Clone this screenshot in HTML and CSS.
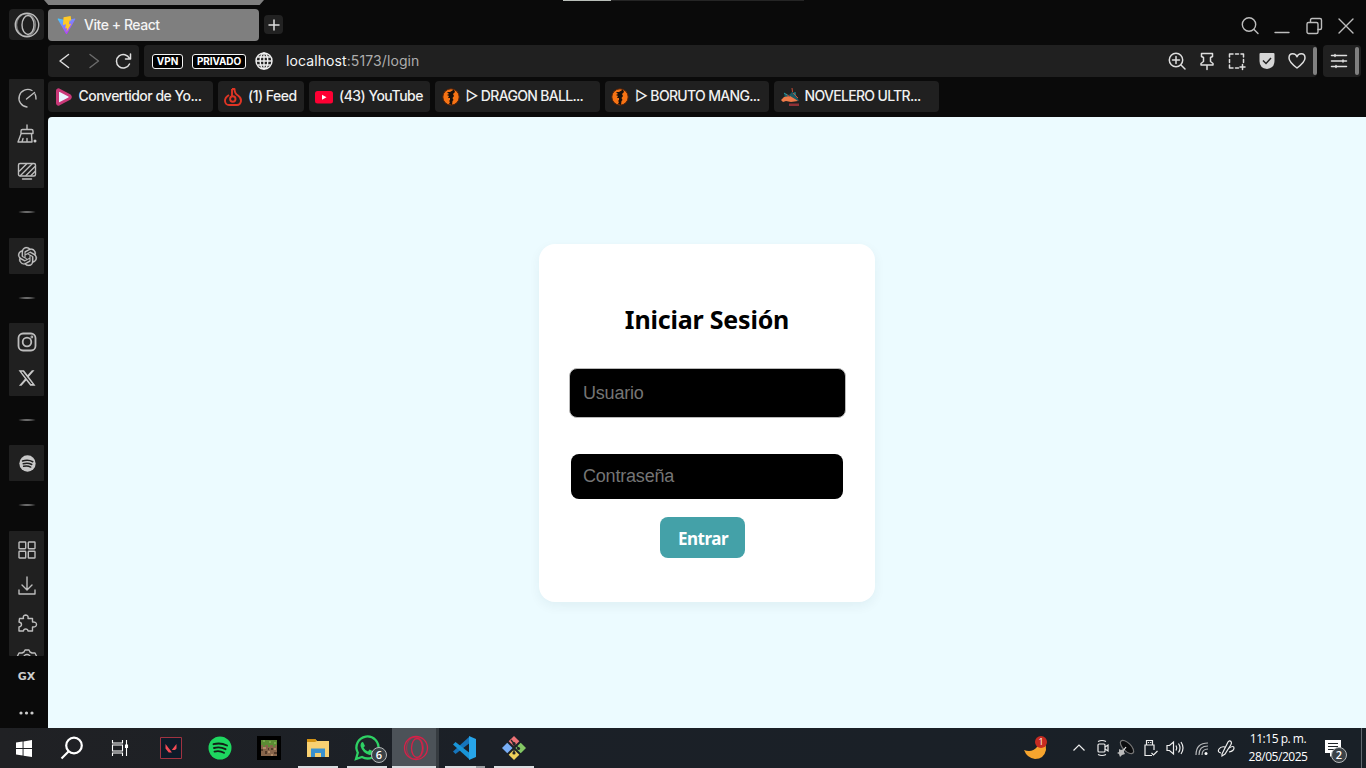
FILE: index.html
```html
<!DOCTYPE html>
<html lang="es">
<head>
<meta charset="utf-8">
<title>Vite + React</title>
<link rel="stylesheet" href="styles.css">
</head>
<body>
<div class="browser">
  <aside class="sidebar">
    <div class="opera-button"><svg width="28" height="28" viewBox="0 0 28 28" class="line"><circle cx="14" cy="14" r="11.700"/><ellipse cx="15" cy="14" rx="6" ry="9.500"/><ellipse cx="13" cy="14" rx="9.500" ry="11.200" opacity=".6"/></svg></div>
    <div class="side-group group-tools">
      <div class="side-item"><svg width="20" height="20" viewBox="0 0 20 20" class="line"><path d="M15 2.500A8.800 8.800 0 1 0 10 19M19 11A9 9 0 0 0 18 6M9.500 11l8-6.500"/></svg></div>
      <div class="side-item"><svg width="20" height="20" viewBox="0 0 20 20" class="line"><path d="M10 1v4M4 9.500V7Q4 5.500 5.500 5.500h9q1.500 0 1.500 1.500v2.500zM4 10L1 18H15L14.500 10M5 18l1-3.500M10 18v-3.500"/><circle cx="18" cy="17" r="1.500" fill="#ccc" stroke="none"/></svg></div>
      <div class="side-item"><svg width="20" height="20" viewBox="0 0 20 20" class="line"><rect x="1.500" y="2.500" width="17" height="12.500" rx="1.500"/><path d="M2.500 10l7-7M3.500 14.500L15 3M9 14.500l9-9M14 14.500l4-4M5.500 18h9"/></svg></div>
    </div>
    <i class="side-rule rule-a"></i>
    <div class="side-group group-chat"><div class="side-item"><svg width="19" height="19" viewBox="0 0 24 24" fill="#c4c4c4" stroke="#c4c4c4" stroke-width=".3"><path d="M22.280 9.820a5.980 5.980 0 0 0-.520-4.910 6.050 6.050 0 0 0-6.510-2.900A6.070 6.070 0 0 0 4.980 4.180a5.980 5.980 0 0 0-4 2.900 6.050 6.050 0 0 0 .740 7.100 5.980 5.980 0 0 0 .510 4.910 6.050 6.050 0 0 0 6.510 2.900A5.980 5.980 0 0 0 13.260 24a6.060 6.060 0 0 0 5.770-4.210 5.990 5.990 0 0 0 4-2.900 6.060 6.060 0 0 0-.750-7.070zm-9.020 12.610a4.480 4.480 0 0 1-2.880-1.040l.140-.080 4.780-2.760a.800.800 0 0 0 .390-.680v-6.740l2.020 1.170a.070.070 0 0 1 .040.050v5.580a4.500 4.500 0 0 1-4.490 4.500zm-9.660-4.130a4.470 4.470 0 0 1-.530-3.010l.140.090 4.780 2.760a.770.770 0 0 0 .780 0l5.840-3.370v2.330a.080.080 0 0 1-.030.060L9.740 19.950a4.500 4.500 0 0 1-6.140-1.650zM2.340 7.900a4.490 4.490 0 0 1 2.370-1.970v5.670a.770.770 0 0 0 .390.680l5.810 3.350-2.020 1.170a.080.080 0 0 1-.070 0L3.990 14A4.500 4.500 0 0 1 2.340 7.900zm16.600 3.860l-5.830-3.390 2.010-1.160a.080.080 0 0 1 .070 0l4.830 2.790a4.490 4.490 0 0 1-.680 8.100v-5.680a.790.790 0 0 0-.400-.660zm2.010-3.020l-.140-.090-4.770-2.780a.780.780 0 0 0-.790 0L9.410 9.230V6.900a.070.070 0 0 1 .030-.060l4.830-2.790a4.500 4.500 0 0 1 6.680 4.690zM8.310 12.860l-2.020-1.160a.080.080 0 0 1-.040-.060V6.070a4.500 4.500 0 0 1 7.380-3.450l-.140.080-4.790 2.760a.800.800 0 0 0-.390.680zm1.090-2.360L12 9l2.610 1.500v3L12 15l-2.600-1.500z"/></svg></div></div>
    <i class="side-rule rule-b"></i>
    <div class="side-group group-social">
      <div class="side-item"><svg width="20" height="20" viewBox="0 0 20 20" class="line thick"><rect x="1.500" y="1.500" width="17" height="17" rx="4.500"/><circle cx="10" cy="10" r="4.300"/><circle cx="14.900" cy="5" r=".5"/></svg></div>
      <div class="side-item"><svg width="17" height="18" viewBox="0 0 24 24" fill="#c8c8c8"><path d="M18.240 1h3.680l-8.030 9.180L23.330 23h-7.400l-5.790-7.570L3.510 23H-.170l8.590-9.820L-.640 1h7.580l5.240 6.930zm-1.290 19.500h2.040L5.490 3.100H3.310z"/></svg></div>
    </div>
    <i class="side-rule rule-c"></i>
    <div class="side-group group-music"><div class="side-item"><svg width="17" height="17" viewBox="0 0 24 24"><circle cx="12" cy="12" r="11.500" fill="#c8c8c8"/><path d="M5 8.500q8-2.500 14.500 1M6 12.400q6.500-2 12 1M6.500 16q5.500-1.500 10 1" fill="none" stroke="#202020" stroke-width="2.100" stroke-linecap="round"/></svg></div></div>
    <i class="side-rule rule-d"></i>
    <div class="side-group group-apps">
      <div class="side-item"><svg width="18" height="18" viewBox="0 0 18 18" class="line"><rect x="1" y="1" width="6.700" height="6.700" rx=".6"/><rect x="10.300" y="1" width="6.700" height="6.700" rx=".6"/><rect x="1" y="10.300" width="6.700" height="6.700" rx=".6"/><rect x="10.300" y="10.300" width="6.700" height="6.700" rx=".6"/></svg></div>
      <div class="side-item"><svg width="18" height="20" viewBox="0 0 18 20" class="line"><path d="M9 1v12.500M4 9l5 5 5-5M1 14v4h16v-4"/></svg></div>
      <div class="side-item"><svg width="20" height="20" viewBox="0 0 20 20" class="line"><path d="M2.500 5H6.500Q5.500 1.800 8.700 1.500 11.800 1.800 11 5H15.500V8.500Q19.500 8.200 19.500 11 19.500 13.800 15.500 13.500V17.500H11Q10.800 15.500 8.700 15.500T6.500 17.500H2V13.500Q4.500 13 4.500 11T2 8.500z" transform="translate(0 .5)"/></svg></div>
      <div class="side-item"><svg width="20" height="20" viewBox="0 0 20 20" class="line"><path d="M7 3l1-2h4l1 2 2 1h3l1.500 3-1 3 1 3-1.500 3h-3l-3 2H8l-3-2H2L.500 13l1-3-1-3L2 4h3z"/><circle cx="10" cy="9" r="3.500"/></svg></div>
    </div>
    <div class="gx">GX</div>
    <svg class="dots" width="15" height="4" viewBox="0 0 15 4" fill="#ccc"><circle cx="2" cy="2" r="1.600"/><circle cx="7.500" cy="2" r="1.600"/><circle cx="13" cy="2" r="1.600"/></svg>
  </aside>

  <div class="main">
    <div class="tab-row">
      <div class="tab-island"></div>
      <div class="load-line"><i></i></div>
      <div class="tab"><svg width="19" height="19" viewBox="0 0 32 32"><defs><linearGradient id="violet" x1="0" y1="0" x2=".6" y2="1"><stop stop-color="#41d1ff"/><stop offset="1" stop-color="#bd34fe"/></linearGradient></defs><path d="M1 5l14 25q1 1.500 2 0L31 5q0-1-1-1l-14 3L2 4Q1 4 1 5z" fill="url(#violet)"/><path d="M23 0l-12 2-1 13 5-1-1 7 3-1-1 7 8-14-4 1 1-6 3-1z" fill="#ffc928"/></svg><span>Vite + React</span></div>
      <div class="new-tab"><svg width="12" height="12" viewBox="0 0 12 12" class="line bright"><path d="M6 1v10M1 6h10"/></svg></div>
      <div class="window-icons">
        <svg width="18" height="18" viewBox="0 0 18 18" class="line"><circle cx="8" cy="7.500" r="6.700"/><path d="M13 12.500l4 4"/></svg>
        <svg width="16" height="18" viewBox="0 0 16 18" class="line"><path d="M1 15.500h14"/></svg>
        <svg width="17" height="18" viewBox="0 0 17 18" class="line"><rect x="1" y="5.500" width="11" height="11" rx="1.500"/><path d="M4.500 5V3q0-1.500 1.500-1.500h8q1.500 0 1.500 1.500v8q0 1.500-1.500 1.500h-2"/></svg>
        <svg width="16" height="18" viewBox="0 0 16 18" class="line"><path d="M1 2l14 14M15 2L1 16"/></svg>
      </div>
    </div>

    <div class="address-row">
      <div class="nav-box">
        <svg width="12" height="16" viewBox="0 0 12 16" class="line bright"><path d="M10.500 1.500L2 8l8.500 6.500"/></svg>
        <svg width="12" height="16" viewBox="0 0 12 16" class="line dim"><path d="M2 1.500L10.500 8 2 14.500"/></svg>
        <svg width="17" height="17" viewBox="0 0 17 17" class="line bright reload"><path d="M14.500 11A6.800 6.800 0 1 1 14.500 5.500M15.500 1v5h-5"/></svg>
      </div>
      <div class="url-box">
        <b class="badge vpn">VPN</b><b class="badge privado">PRIVADO</b>
        <svg class="globe" width="18" height="18" viewBox="0 0 18 18"><circle cx="9" cy="9" r="8"/><ellipse cx="9" cy="9" rx="3.800" ry="8"/><path d="M9 1v16M1 9h16M2.500 5h13M2.500 13h13"/></svg>
        <span class="url">localhost<em>:5173/login</em></span>
        <div class="url-icons">
          <svg width="18" height="18" viewBox="0 0 18 18" class="line bright"><circle cx="8" cy="8" r="6.700"/><path d="M13 13l4 4M8 4.500v7M4.500 8h7"/></svg>
          <svg width="18" height="18" viewBox="0 0 18 18" class="line bright"><path d="M3.500 1.500h11v3l-2 1v4l2.500 2v1.500H3V11.500l2.500-2v-4l-2-1zM9 13v4.500"/></svg>
          <svg width="18" height="18" viewBox="0 0 18 18" class="line bright"><path d="M1.500 5V2H5M7.500 2h3M13 2h2.500v3M1.500 7.500v3M15.500 7.500v3M1.500 13v3H5M7.500 16h3M14.500 12.500v5M12 15h5"/></svg>
          <svg width="18" height="18" viewBox="0 0 18 18"><path d="M1.500 2q0-1 1-1h13q1 0 1 1v7q0 7-7.500 8-7.500-1-7.500-8z" fill="#d5d5d5"/><path d="M5 8.500l3 3 5-5.500" fill="none" stroke="#222" stroke-width="1.500"/></svg>
          <svg width="18" height="18" viewBox="0 0 18 18" class="line bright"><path d="M9 16Q1 10 1 6 1 1.800 4.700 1.800 8 1.800 9 4.800 10 1.800 13.300 1.800 17 1.800 17 6 17 10 9 16z"/></svg>
        </div>
        <i class="grip"></i>
      </div>
      <div class="settings-box"><svg width="16" height="16" viewBox="0 0 16 16" class="line bright"><path d="M.5 2.500h15M.5 8h15M.5 13.500h15M4 1.500v2M12 7v2M5 12.500v2"/></svg><i class="grip"></i></div>
    </div>

    <div class="bookmarks">
      <div class="bookmark bm-wide"><svg width="18" height="18" viewBox="0 0 18 18"><path d="M2.500 2.800Q2.500 1.500 4 2l10.500 5.500q1.500 1.500 0 3L4 16q-1.500.5-1.500-1z" fill="#e8f4ff" stroke="#c93878" stroke-width="3" stroke-linejoin="round"/></svg><span class="t1">Convertidor de Yo...</span></div>
      <div class="bookmark bm-feed"><svg width="18" height="18" viewBox="0 0 18 18" fill="none" stroke="#df3525" stroke-width="1.900" stroke-linejoin="round"><path d="M8 1h2.500q0 4.500 3.500 6.500 3.500 2.500 3 5.500-.7 4-4 4H5q-3.500 0-4-4Q.8 9.500 5 7"/><circle cx="8.800" cy="11" r="2.700"/><path d="M8 1v7.500"/></svg><span class="t2">(1) Feed</span></div>
      <div class="bookmark bm-yt"><svg width="18" height="18" viewBox="0 0 18 18"><rect y="3" width="18" height="12.500" rx="2.500" fill="#ff0033"/><path d="M7 6.800v5l4.500-2.500z" fill="#fff"/></svg><span class="t3">(43) YouTube</span></div>
      <div class="bookmark bm-wide"><svg width="18" height="18" viewBox="0 0 18 18"><circle cx="9" cy="9" r="8.200" fill="#f77314" stroke="#51210a"/><path d="M12 1.500L8 4 5 4l2 2-2 1 2 1-1 2h2v2l-1 1 1 1-1 2 3 1 .5-4 1-1-1-2 1.500-2-1-2 2-2z" fill="#17100c"/></svg><span class="t4">▷ DRAGON BALL...</span></div>
      <div class="bookmark bm-wide"><svg width="18" height="18" viewBox="0 0 18 18"><circle cx="9" cy="9" r="8.200" fill="#f77314" stroke="#51210a"/><path d="M12 1.500L8 4 5 4l2 2-2 1 2 1-1 2h2v2l-1 1 1 1-1 2 3 1 .5-4 1-1-1-2 1.500-2-1-2 2-2z" fill="#17100c"/></svg><span class="t5">▷ BORUTO MANG...</span></div>
      <div class="bookmark bm-wide"><svg width="18" height="18" viewBox="0 0 18 18"><path d="M3 5l5 2 3-3 3 1 3 6 1 2-6-1-8-1z" fill="#1c5963"/><path d="M0 12l3-3 6-1 5 3 3 2-7 1-5-1-3 1z" fill="#ef7b49"/><path d="M8 15.500h10V18H8z" fill="#8f3136"/><path d="M11 0l.5 4M5 6l4 3M12 5l5 5" stroke="#c94d35"/><path d="M3 5l3 2M14 4v3" stroke="#279da2"/></svg><span class="t6">NOVELERO ULTR...</span></div>
    </div>

    <main class="page">
      <form class="card">
        <h1>Iniciar Sesión</h1>
        <input class="field user" type="text" placeholder="Usuario">
        <input class="field password" type="password" placeholder="Contraseña">
        <button class="submit" type="button">Entrar</button>
      </form>
    </main>
  </div>
</div>

<footer class="taskbar">
  <div class="system-keys">
    <div><svg width="16" height="17" viewBox="0 0 17 17" preserveAspectRatio="none" fill="#fff"><path d="M0 2.500l7-1v6.500H0zM8 1.400L17 0v8H8zM0 9h7v6.500l-7-1zM8 9h9v8l-9-1.300z"/></svg></div>
    <div><svg width="24" height="24" viewBox="0 0 24 24" fill="none" stroke="#fff" stroke-width="2.200"><circle cx="14" cy="9.500" r="7.800"/><path d="M8.500 15.500L1.500 22.500"/></svg></div>
    <div><svg width="18" height="18" viewBox="0 0 18 18" fill="none" stroke="#fff" stroke-width="1.100"><path d="M1.500 1v3h10V1M1.500 17v-3h10v3M1.500 6v6h10V6zM15.500 1v16"/><path d="M14.500 6h2v2.500h-2z" fill="#fff"/></svg></div>
  </div>
  <div class="apps">
    <div class="app"><svg width="22" height="22" viewBox="0 0 22 22"><path d="M.5.500h21v21H.500z" fill="#0d1b29" stroke="#a03340"/><path d="M5.500 7v4.500l3.200 4H12zM16.500 7v4.500L15 13h-3.200z" fill="#f34b55"/></svg></div>
    <div class="app"><svg width="24" height="24" viewBox="0 0 24 24"><circle cx="12" cy="12" r="11.500" fill="#1ed760"/><path d="M5.500 8.200q7-2 13.500 1.300M6 12q6-1.700 11.500 1.200M6.500 15.600q5-1.400 9.500 1.200" fill="none" stroke="#132018" stroke-width="1.900" stroke-linecap="round"/></svg></div>
    <div class="app"><svg width="24" height="24" viewBox="0 0 24 24"><path d="M0 0h24v24H0z" fill="#000"/><path d="M4 4h16v16H4z" fill="#87644a"/><path d="M4 4h16v5h-2v2h-2V9h-3v2h-2V9H8v2H6V9H4z" fill="#5c8c34"/><path d="M6 4h2v2H6zM12 5h2v2h-2zM17 6h2v2h-2z" fill="#79a94a"/><path d="M4 13h2v2H4zM8 15h2v3H8zM14 12h2v2h-2zM17 16h3v2h-3zM11 12h1v2h-1z" fill="#533a29"/><path d="M6 11h3v2H6zM11 15h2v2h-2zM17 12h2v2h-2zM14 18h2v2h-2z" fill="#b18a67"/></svg></div>
    <div class="app open"><svg width="22" height="20" viewBox="0 0 22 20"><path d="M0 1h8l2 2h12v16H0z" fill="#f8d071"/><path d="M0 1h8l2 2-2 1H0z" fill="#d39213"/><path d="M4 19v-8.500h14V19h-4v-4H8v4z" fill="#3a91cf"/></svg></div>
    <div class="app open whatsapp"><svg width="26" height="26" viewBox="0 0 26 26"><path d="M2 24l1.800-6.300A11 11 0 1 1 8 22z" fill="#1e2528" stroke="#2ed164" stroke-width="2.300"/><path d="M9 7l2 4-1.500 1.500q1.500 3 4.500 4l1.500-2 4 2q-.5 3.500-4 3.500Q8.500 18 6.500 11 6.500 7 9 7z" fill="#2ed164"/></svg><span class="count">6</span></div>
    <div class="app active"><svg width="26" height="26" viewBox="0 0 26 26" fill="none" stroke="#d92048" stroke-width="1.300"><circle cx="13" cy="13" r="11.500"/><ellipse cx="14" cy="13" rx="5.500" ry="9.500"/><ellipse cx="12" cy="13" rx="8.500" ry="11" opacity=".55"/></svg></div>
    <div class="app open code"><svg width="25" height="24" viewBox="0 0 25 24"><path d="M17 1L1 15.500l2.500 2.500L19 6z" fill="#1675bc"/><path d="M17 23L1 8.500 3.500 6 19 18z" fill="#1995d7"/><path d="M17 0l7 3v18l-7 3z" fill="#27a5e9"/></svg></div>
    <div class="app open"><svg width="24" height="24" viewBox="0 0 24 24"><g transform="rotate(45 12 12)"><path d="M3.500 3.500H11V11H3.500z" fill="#ed7276"/><path d="M13 3.500h7.500V11H13z" fill="#83c764"/><path d="M3.500 13H11v7.500H3.500z" fill="#79aef6"/><path d="M13 13h7.500v7.500H13z" fill="#efd15b"/></g><path d="M9 4l3 3.500V18M12 8l5 4.500" fill="none" stroke="#232629" stroke-width="1.300"/><circle cx="12" cy="7.500" r="1.600" fill="#232629"/><circle cx="16.500" cy="12.500" r="1.600" fill="#232629"/><circle cx="12" cy="17" r="1.600" fill="#232629"/></svg></div>
  </div>
  <div class="tray">
    <div class="weather"><svg width="24" height="24" viewBox="0 0 24 24"><path d="M0 14q8 3 13-3 3-4 2-8 8 3 7 11-2 9-11 9Q3 22 0 14z" fill="#f7a52e"/></svg><span>1</span></div>
    <div class="tray-icons">
      <svg width="14" height="18" viewBox="0 0 14 18"><path d="M1.500 11.500L7 6l5.500 5.500"/></svg>
      <svg width="16" height="18" viewBox="0 0 16 18"><rect x="4" y="5" width="7" height="8" rx="1"/><path d="M11 8l3-2v6l-3-2M4 2.500q4-2 8 0M4 15.500q4 2 8 0"/></svg>
      <svg width="18" height="18" viewBox="0 0 18 18"><ellipse cx="10" cy="8" rx="8.500" ry="4" transform="rotate(45 10 8)" fill="#0c0d0f" stroke="#777"/><path d="M6 12L9 8"/><path d="M2 10l2 1 3-1v3l1 2-3 1-2 2-1-3-2-1 2-1z" fill="#bbb" stroke="none"/></svg>
      <svg width="16" height="18" viewBox="0 0 16 18"><path d="M3.500 6V1.500h6V6M9 16.500H2V6h9v5M5.500 3v1M7.700 3v1M8.500 14l2 2 4-4"/></svg>
      <svg width="19" height="18" viewBox="0 0 19 18"><path d="M1 6.500h2.500L7.500 3v12l-4-3.500H1zM10 6.500q1.500 2.500 0 5M12.500 4.500q3 4.500 0 9M15 3q4 6 0 12"/></svg>
      <svg width="17" height="18" viewBox="0 0 17 18"><path d="M3 16Q3 4 15 4M6 16q0-9 9-9M9 16q0-6 6-6" opacity=".75"/><circle cx="13" cy="14.500" r="1.500" fill="#fff" stroke="none"/></svg>
      <svg width="19" height="18" viewBox="0 0 19 18"><path d="M5 15L11 3q1.500-2 3-.5Q15 4 14 5.500L8 15l-3 2zM8 8Q4 7 2 10t2 4M12 9q5-3 5 0t-5 4"/></svg>
    </div>
    <div class="clock"><span>11:15 p. m.</span><span>28/05/2025</span></div>
    <div class="notice"><svg width="18" height="18" viewBox="0 0 18 18"><path d="M1 1h16v13h-7l-4 4v-4H1z" fill="#fff"/><path d="M4 4.500h10M4 7.500h10M4 10.500h7" stroke="#20262a"/></svg><span class="count">2</span></div>
    <i class="peek"></i>
  </div>
</footer>
</body>
</html>
```

FILE: styles.css
```css
* { box-sizing: border-box; }
html, body { margin: 0; width: 1366px; height: 768px; overflow: hidden; }
body { background: #0a0a0a; color: #eee; font-family: Inter, Roboto, sans-serif; }
svg { display: block; flex: none; overflow: visible; }
.line { fill: none; stroke: #bdbdbd; stroke-width: 1.4; stroke-linecap: round; stroke-linejoin: round; }
.line.thick { stroke-width: 1.8; }
.line.bright { stroke: #dedede; stroke-width: 1.5; }
.line.dim { stroke: #6c6c6c; }

.browser { display: flex; height: 728px; }

.sidebar { width: 48px; padding: 9px 4px 0 9px; display: flex; flex-direction: column; overflow: hidden; }
.opera-button { flex: none; width: 35px; height: 31px; border-radius: 4px; background: #202020; display: grid; place-items: center; margin-bottom: 39px; }
.side-group { flex: none; width: 35px; background: #202020; border-radius: 1px; overflow: hidden; }
.side-item { height: 36.5px; display: grid; place-items: center; padding: 1px 0 0 1px; }
.group-tools { height: 109px; }
.group-chat, .group-music { height: 36px; }
.group-social { height: 73px; }
.group-apps { height: 125px; }
.side-rule { flex: none; height: 2px; width: 20px; margin: 23px 0 25px 8px; background: radial-gradient(closest-side, #ccc, #0a0a0a); }
.rule-b { margin: 23px 0 24px 8px; }
.rule-c { margin-top: 23px; margin-bottom: 24px; }
.rule-d { margin-top: 23px; margin-bottom: 25px; }
.gx { flex: none; width: 35px; margin-top: 13px; text-align: center; font: bold 11px/16px "DejaVu Sans", sans-serif; color: #ccc; }
.dots { margin: 26px 0 0 10px; }

.main { width: 1318px; display: flex; flex-direction: column; }
.tab-row { position: relative; height: 45px; padding-top: 9px; display: flex; align-items: flex-start; }
.tab-island { position: absolute; left: -4px; top: 0; width: 220px; height: 5px; background: #7f7f7f; clip-path: polygon(0 0, 100% 0, 98% 100%, 2% 100%); }
.load-line { position: absolute; left: 515px; top: 0; width: 241px; height: 1px; background: #252525; }
.load-line i { display: block; width: 48px; height: 1px; background: #b9beb9; }
.tab { width: 211px; height: 32px; border-radius: 4px; background: #7f7f7f; display: flex; align-items: center; padding-left: 9px; gap: 8px; font-size: 14px; font-weight: 500; letter-spacing: -.46px; color: #f4f4f4; white-space: nowrap; }
.tab span, .bookmark span { padding-bottom: 2px; }
.new-tab { width: 19px; height: 19px; margin: 6px 0 0 5px; border-radius: 4px; background: #222; display: grid; place-items: center; }
.window-icons { display: flex; gap: 15.500px; margin: 8px 12px 0 auto; }

.address-row { height: 32px; display: flex; flex: none; }
.nav-box { width: 91px; border-radius: 4px; background: #202020; display: flex; align-items: center; padding-left: 10px; gap: 18px; margin-right: 5px; }
.reload { margin-left: -3px; }
.url-box { width: 1173px; border-radius: 4px; background: #202020; display: flex; align-items: center; padding-left: 8px; margin-right: 6px; }
.badge { height: 15px; border: 1px solid #f5f5f5; border-radius: 3px; background: #000; color: #fff; font: 700 10px/13px Inter, sans-serif; text-align: center; white-space: nowrap; }
.vpn { width: 31px; }
.privado { width: 54px; margin-left: 9px; letter-spacing: -.1px; }
.globe { margin-left: 9px; fill: none; stroke: #f0f0f0; stroke-width: 1.4; }
.url { margin-left: 13px; padding-bottom: 2px; font-size: 14px; letter-spacing: .1px; color: #f5f5f5; white-space: nowrap; }
.url em { font-style: normal; color: #adadad; }
.url-icons { display: flex; gap: 12px; margin-left: auto; }
.grip { width: 4px; height: 28px; margin-left: 7px; border-radius: 2px; background: #808080; }
.settings-box { width: 38px; border-radius: 4px; background: #202020; display: flex; align-items: center; padding-left: 8px; }
.settings-box .grip { margin-left: 8px; }

.bookmarks { height: 40px; padding-top: 4px; display: flex; gap: 5px; flex: none; }
.bookmark { height: 31px; border-radius: 4px; background: #202020; display: flex; align-items: center; padding-left: 6.500px; gap: 6px; font-size: 14px; font-weight: 500; color: #f0f0f0; white-space: nowrap; }
.bm-wide { width: 164.500px; }
.bm-feed { width: 86px; }
.bm-yt { width: 121.500px; }
.t1, .t2, .t3 { letter-spacing: -.52px; }
.t4, .t5, .t6 { letter-spacing: -.68px; }

.page { flex: 1; border-top-left-radius: 4px; background: #ecfbff; padding: 127px 0 0 491px; }
.card { width: 336px; height: 358px; background: #fff; border-radius: 16px; box-shadow: 0 4px 12px rgba(0, 50, 70, .06); display: flex; flex-direction: column; padding: 58px 30px 0; }
h1 { margin: 0; width: 276px; color: #000; font: 700 25px/34px "Noto Sans", sans-serif; letter-spacing: -.2px; text-align: center; }
.field { display: block; outline: 0; color: #fff; background: #000; font: 18px "Liberation Sans", sans-serif; letter-spacing: -.2px; border-radius: 8px; padding: 0 12px; }
.field::placeholder { color: #757575; opacity: 1; }
.user { width: 277px; height: 50px; margin: 32px 0 0 -.5px; border: 1px solid #b9b9b9; padding-left: 13.500px; }
.password { width: 272px; height: 45px; margin: 36px 0 0 2px; border: 0; }
.submit { width: 85px; height: 41px; margin: 18px 0 0 91px; padding: 2px 0 0 1px; border: 0; border-radius: 8px; background: #44a1a8; color: #fff; font: 700 17px "Noto Sans", sans-serif; letter-spacing: -.5px; }

.taskbar { height: 40px; display: flex; background: linear-gradient(90deg, #202124, #1b2027 35%, #192027); }
.system-keys { display: flex; width: 146px; }
.system-keys > div { width: 48px; display: grid; place-items: center; }
.apps { display: flex; }
.app { position: relative; width: 49px; height: 40px; display: grid; place-items: center; }
.open::after, .active::after { content: ""; position: absolute; left: 5px; right: 4px; bottom: 0; height: 2px; background: #d8dde0; }
.active { background: linear-gradient(90deg, transparent 1px, #4c5258 1px 45px, #363b40 45px 48px, transparent 48px); }
.active::after { left: 1px; right: 4px; }
.code::after { background: linear-gradient(90deg, #d8dde0 31px, #9b9fa3 31px); }
.count { position: absolute; width: 16px; height: 16px; border: 1px solid #b7babb; border-radius: 50%; background: #3b4247; color: #fff; font: 600 11px/14px "Open Sans", sans-serif; text-align: center; }
.whatsapp .count { left: 29px; top: 19px; }
.tray { display: flex; align-items: center; margin-left: auto; width: 342px; }
.weather { position: relative; width: 24px; }
.weather span { position: absolute; left: 11px; top: 0; width: 12px; height: 12px; border-radius: 50%; background: #c72b21; color: #fff; font: 9px/12px "Open Sans", sans-serif; text-align: center; }
.tray-icons { display: flex; gap: 7.500px; margin-left: 24px; fill: none; stroke: #eee; stroke-width: 1.2; }
.clock { width: 72px; margin-left: 6px; display: grid; text-align: center; font: 12px/18px "Open Sans", sans-serif; letter-spacing: -.48px; color: #fff; white-space: nowrap; }
.notice { position: relative; width: 18px; margin-left: 10px; }
.notice .count { left: 7px; top: 8px; }
.peek { width: 1px; height: 40px; margin-left: auto; margin-right: 4px; background: #626970; }
```
